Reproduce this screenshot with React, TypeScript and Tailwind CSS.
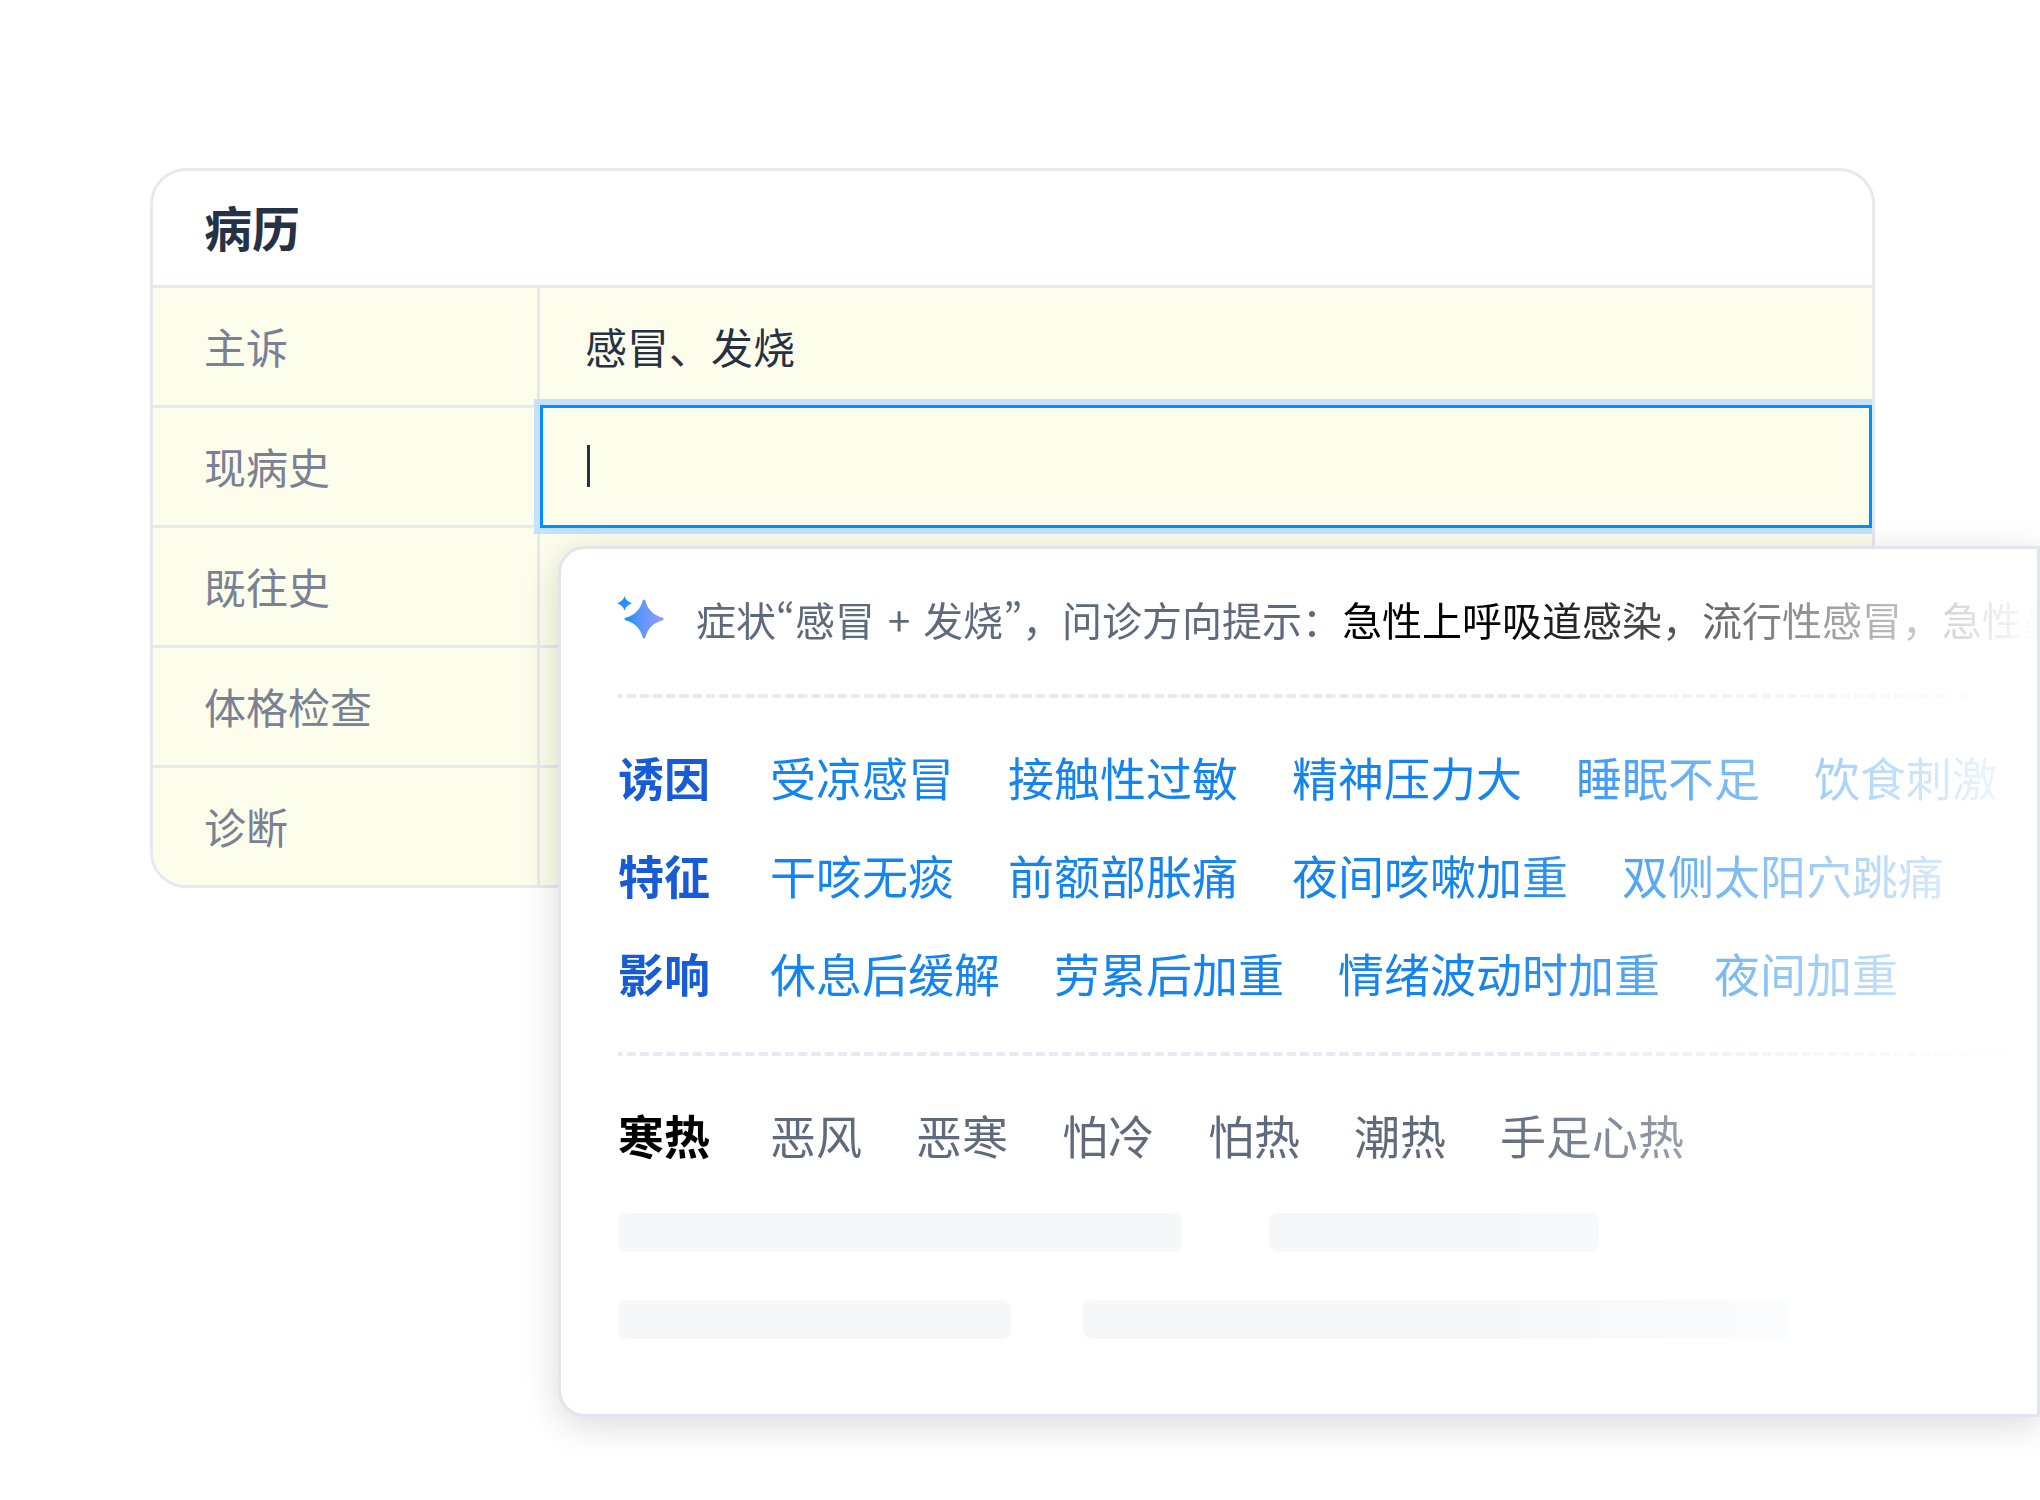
import { useState } from "react";

type Field = { id: string; label: string };

const FIELDS: Field[] = [
  { id: "complaint", label: "主诉" },
  { id: "present", label: "现病史" },
  { id: "past", label: "既往史" },
  { id: "exam", label: "体格检查" },
  { id: "diagnosis", label: "诊断" },
];

const GROUPS = [
  { name: "诱因", items: ["受凉感冒", "接触性过敏", "精神压力大", "睡眠不足", "饮食刺激"] },
  { name: "特征", items: ["干咳无痰", "前额部胀痛", "夜间咳嗽加重", "双侧太阳穴跳痛"] },
  { name: "影响", items: ["休息后缓解", "劳累后加重", "情绪波动时加重", "夜间加重"] },
];

const COLD_HEAT = ["恶风", "恶寒", "怕冷", "怕热", "潮热", "手足心热"];

function SparkleIcon() {
  return (
    <svg viewBox="0 0 48 48" className="h-12 w-12 shrink-0 overflow-visible" aria-hidden="true">
      <defs>
        <linearGradient id="sparkle" x1="7" y1="0" x2="46" y2="0" gradientUnits="userSpaceOnUse">
          <stop offset="0" stopColor="#1890f5" />
          <stop offset="0.45" stopColor="#6396fd" />
          <stop offset="1" stopColor="#9b98f8" />
        </linearGradient>
      </defs>
      <path d="M6.500 0 C7.500 3.600 10 6 14 7.300 C10 8.600 7.500 11 6.500 14.700 C5.500 11 3 8.600 -0.700 7.300 C3 6 5.500 3.600 6.500 0Z" fill="#2492f7" />
      <path
        d="M24.800 4.300 Q26 2.700 27.200 4.300 C29.500 13.500 35.500 19.500 45 21.800 Q46.600 23 45 24.200 C35.500 26.500 29.500 32.500 27.200 41.700 Q26 43.300 24.800 41.700 C22.500 32.500 16.500 26.500 7.500 24.200 Q5.400 23 7.500 21.800 C16.500 19.500 22.500 13.500 24.800 4.300Z"
        fill="url(#sparkle)"
      />
    </svg>
  );
}

function DashedLine() {
  return (
    <svg className="block h-1 w-full" aria-hidden="true">
      <line x1="0" y1="2" x2="100%" y2="2" stroke="#e6eaf2" strokeWidth="4" strokeLinecap="round" strokeDasharray="6 7.2" strokeDashoffset="3" />
    </svg>
  );
}

// proportional curly quotes, the SC face only has full-width ones
function Quote({ children }: { children: string }) {
  return <span className="font-['Noto_Sans_CJK_KR',sans-serif]" lang="ko">{children}</span>;
}

export default function App() {
  const [values, setValues] = useState<Record<string, string>>({ complaint: "感冒、发烧" });
  const [active, setActive] = useState("present");

  const setField = (id: string, value: string) => setValues((prev) => ({ ...prev, [id]: value }));

  const addTerm = (term: string) => {
    const current = values[active];
    setField(active, current ? `${current}、${term}` : term);
  };

  return (
    <main className="relative min-h-screen overflow-hidden bg-white pt-[168px] pr-[165px] pl-[150px] font-['Noto_Sans_CJK_SC',sans-serif]" lang="zh-CN">
      <section className="overflow-hidden rounded-[36px] border-3 border-[#e6e9ee] bg-white">
        <h1 className="flex h-[114px] items-center pb-[4px] pl-[51px] text-[48px] font-bold text-[#263145]">病历</h1>

        <table className="w-full table-fixed border-separate border-spacing-0 bg-[#fcfdea] text-[42px]">
          <tbody>
            {FIELDS.map(({ id, label }) => (
              <tr key={id} className="h-[120px]">
                <th scope="row" className="w-[387px] border-t-3 border-r-3 border-[#e6e9ee] pb-[2px] pl-[51px] text-left font-normal text-[#7a8194]">
                  <label htmlFor={id}>{label}</label>
                </th>
                <td className="relative border-t-3 border-[#e6e9ee] p-0 pb-[2px] text-[#263145]">
                  {active === id && (
                    <span className="absolute inset-x-0 -inset-y-[3px] z-10 border-3 border-[#0090ff] shadow-[0_0_0_6px_#c5e1fe]" />
                  )}
                  <div className="relative z-20 flex items-center pr-6 pl-[45px]">
                    {active === id && !values[id] && <span className="ml-[2px] h-[42px] w-[3px] bg-[#263145]" />}
                    <input
                      id={id}
                      value={values[id] ?? ""}
                      onFocus={() => setActive(id)}
                      onChange={(e) => setField(id, e.target.value)}
                      className="h-[80px] min-w-0 flex-1 bg-transparent outline-none"
                    />
                  </div>
                </td>
              </tr>
            ))}
          </tbody>
        </table>
      </section>

      <aside className="absolute top-[546px] right-0 left-[558px] z-30 rounded-l-[27px] border-3 border-[#e0e5ee] bg-white shadow-[0_8px_36px_rgba(0,0,0,0.15)]">
        <div className="overflow-hidden pt-[41px] pb-[75px] pl-[57px] whitespace-nowrap [mask-image:linear-gradient(to_right,#000_63%,transparent)]">
          <div className="flex h-[60px] items-center text-[40px] text-[#5f6b7d]">
            <SparkleIcon />
            <p className="ml-[30px] pb-[2px]">
              症状<Quote>“</Quote>感冒<span className="mx-[4px]"> + </span>发烧<Quote>”</Quote>，问诊方向提示：<span className="text-black">急性上呼吸道感染，流行性感冒，急性鼻</span>
            </p>
          </div>

          <div className="mt-[44px]">
            <DashedLine />
          </div>

          <div className="mt-[50px] flex flex-col gap-[42px] text-[46px] leading-[56px]">
            {GROUPS.map((group) => (
              <div key={group.name} className="flex gap-[54px]">
                <h2 className="w-[98px] shrink-0 font-bold text-[#175bd6]">{group.name}</h2>
                {group.items.map((item) => (
                  <button key={item} type="button" onClick={() => addTerm(item)} className="shrink-0 text-[#1485f0]">
                    {item}
                  </button>
                ))}
              </div>
            ))}
          </div>

          <div className="mt-[52px]">
            <DashedLine />
          </div>

          <div className="mt-[50px] flex gap-[54px] text-[46px] leading-[56px]">
            <h2 className="w-[98px] shrink-0 font-bold text-black">寒热</h2>
            {COLD_HEAT.map((item) => (
              <button key={item} type="button" onClick={() => addTerm(item)} className="shrink-0 text-[#5f6b7d]">
                {item}
              </button>
            ))}
          </div>

          <div className="mt-[51px] flex gap-[87px]">
            <div className="h-[39px] w-[564px] rounded-[9px] bg-[#f5f7f9]" />
            <div className="h-[39px] w-[330px] rounded-[9px] bg-[#f5f7f9]" />
          </div>
          <div className="mt-12 flex gap-[72px]">
            <div className="h-[39px] w-[393px] rounded-[9px] bg-[#f5f7f9]" />
            <div className="h-[39px] w-[705px] rounded-[9px] bg-[#f5f7f9]" />
          </div>
        </div>
      </aside>
    </main>
  );
}
